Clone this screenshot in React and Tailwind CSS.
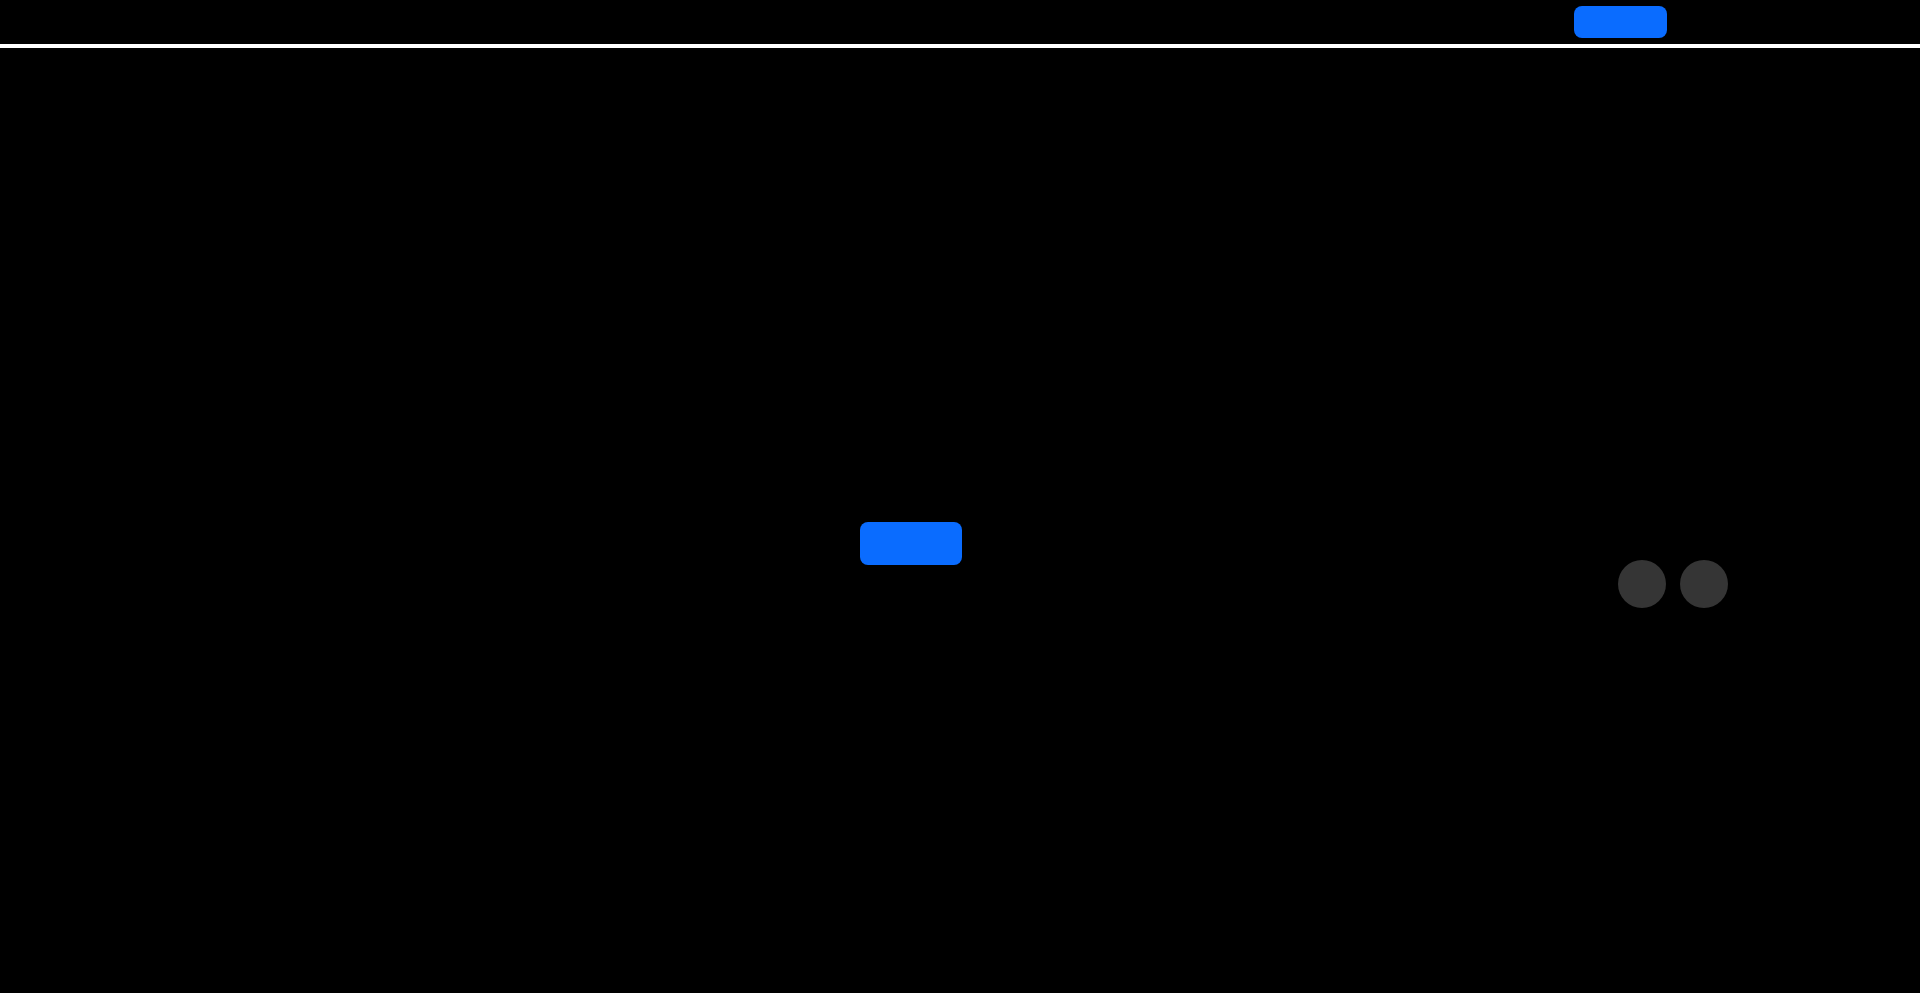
export default function App() {
  return (
    <div className="min-h-screen h-[993px] bg-black flex flex-col overflow-hidden font-['Liberation_Sans',sans-serif]">
      <header className="h-[48px] shrink-0 border-b-4 border-white flex items-center justify-end pr-[253px]">
        <button className="w-[93px] h-[32px] rounded-lg bg-[#0a6cff]" aria-label="action" />
      </header>
      <main className="flex-1 flex items-start pl-[860px]">
        <button className="mt-[474px] w-[102px] h-[43px] rounded-lg bg-[#0a6cff]" aria-label="submit" />
        <div className="mt-[512px] ml-[656px] flex gap-[14px]">
          <span className="w-12 h-12 rounded-full bg-[#353535]" />
          <span className="w-12 h-12 rounded-full bg-[#353535]" />
        </div>
      </main>
    </div>
  );
}
